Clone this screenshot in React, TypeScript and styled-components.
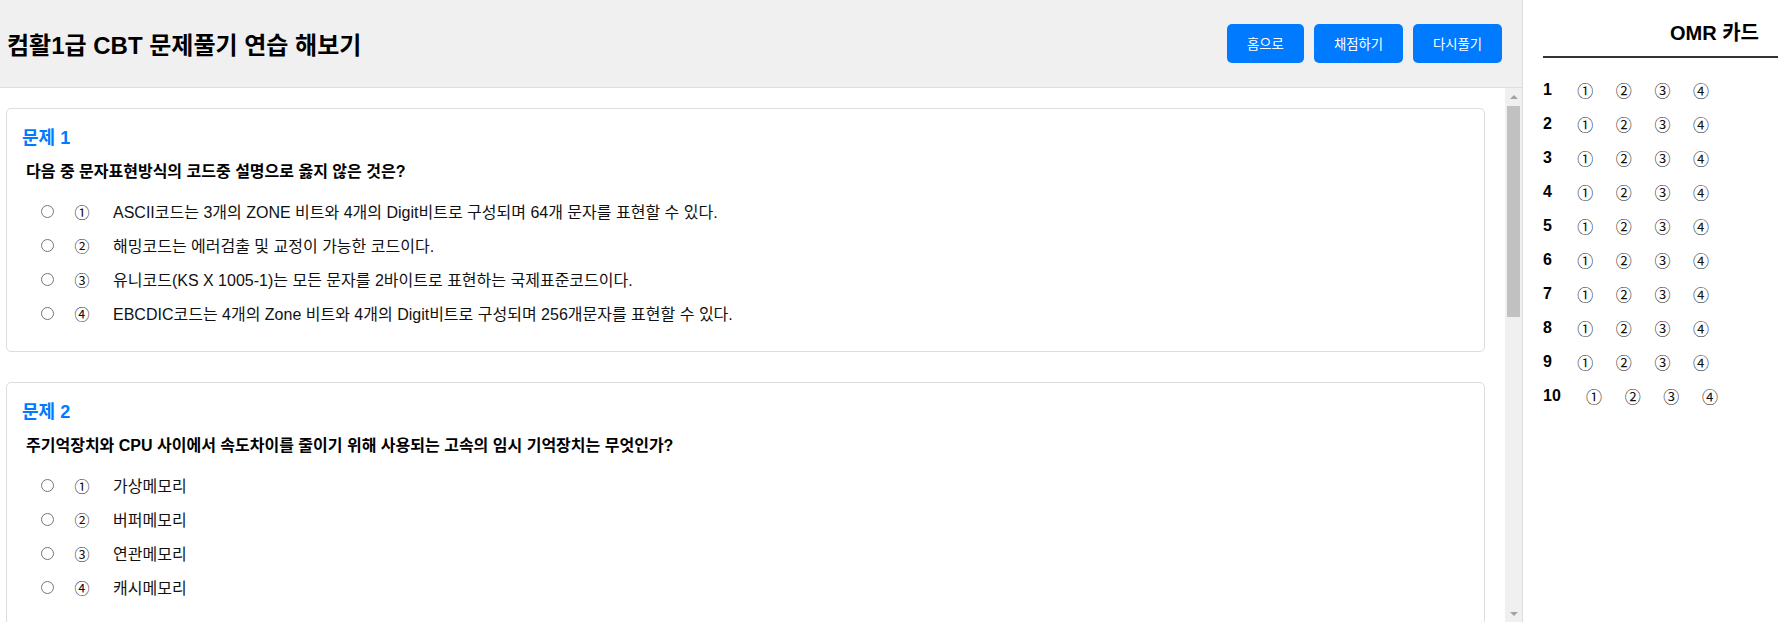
import { FC } from "react"
import styled, { createGlobalStyle } from "styled-components"

interface Question {
  id: number
  text: string
  options: string[]
}

const questions: Question[] = [
  {
    id: 1,
    text: "다음 중 문자표현방식의 코드중 설명으로 옳지 않은 것은?",
    options: [
      "ASCII코드는 3개의 ZONE 비트와 4개의 Digit비트로 구성되며 64개 문자를 표현할 수 있다.",
      "해밍코드는 에러검출 및 교정이 가능한 코드이다.",
      "유니코드(KS X 1005-1)는 모든 문자를 2바이트로 표현하는 국제표준코드이다.",
      "EBCDIC코드는 4개의 Zone 비트와 4개의 Digit비트로 구성되며 256개문자를 표현할 수 있다.",
    ],
  },
  {
    id: 2,
    text: "주기억장치와 CPU 사이에서 속도차이를 줄이기 위해 사용되는 고속의 임시 기억장치는 무엇인가?",
    options: ["가상메모리", "버퍼메모리", "연관메모리", "캐시메모리"],
  },
  {
    id: 3,
    text: "다음 중 CPU 내부의 레지스터에 관한 설명으로 옳지 않은 것은?",
    options: [
      "프로그램 카운터(PC)는 다음에 실행할 명령어의 주소를 기억한다.",
      "명령 레지스터(IR)는 현재 실행 중인 명령어를 기억한다.",
      "누산기(AC)는 연산 결과를 일시적으로 기억한다.",
      "메모리 주소 레지스터(MAR)는 기억장치에서 읽은 데이터를 기억한다.",
    ],
  },
  {
    id: 4,
    text: "다음 중 인터넷 프로토콜인 TCP/IP에 관한 설명으로 옳지 않은 것은?",
    options: [
      "TCP는 메시지를 송수신의 주소와 정보로 묶어 패킷 단위로 나눈다.",
      "IP는 패킷 주소를 해석하고 경로를 결정하여 다음 호스트로 전송한다.",
      "TCP는 OSI 7계층 중 전송 계층에 해당한다.",
      "IP는 OSI 7계층 중 응용 계층에 해당한다.",
    ],
  },
]

const marks = ["①", "②", "③", "④"]
const omrNumbers = Array.from({ length: 10 }, (_, i) => i + 1)

const GlobalStyle = createGlobalStyle`
  * {
    box-sizing: border-box;
  }

  body {
    margin: 0;
    font-family: "Liberation Sans", "Noto Sans CJK KR", sans-serif;
    color: #111;
    background: #fff;
  }
`

const Page = styled.div`
  display: flex;
  height: 100vh;
  overflow: hidden;
`

const Main = styled.main`
  flex: 1;
  min-width: 0;
  display: flex;
  flex-direction: column;
`

const Header = styled.header`
  height: 88px;
  flex-shrink: 0;
  display: flex;
  align-items: center;
  justify-content: space-between;
  padding: 0 20px 0 7px;
  background: #f0f0f0;
  border-bottom: 1px solid #ddd;
`

const Title = styled.h1`
  margin: 0;
  font-size: 24px;
  font-weight: 700;
  color: #000;
`

const ButtonGroup = styled.div`
  display: flex;
  gap: 10px;
`

const Button = styled.button`
  height: 39px;
  padding: 0 20px;
  border: none;
  border-radius: 5px;
  background: #007bff;
  color: #fff;
  font-family: inherit;
  font-size: 13.33px;
  cursor: pointer;
`

const Body = styled.div`
  flex: 1;
  min-height: 0;
  display: flex;
`

const ScrollArea = styled.div`
  flex: 1;
  min-width: 0;
  overflow: hidden;
  padding: 20px 20px 0 6px;
`

const ScrollTrack = styled.div`
  width: 17px;
  flex-shrink: 0;
  display: flex;
  flex-direction: column;
  background: #f0f0f0;
`

const ScrollArrow = styled.div<{ $down?: boolean }>`
  height: 17px;
  flex-shrink: 0;
  display: flex;
  align-items: center;
  justify-content: center;
  margin-top: ${(p) => (p.$down ? "auto" : "0")};

  &::before {
    content: "";
    width: 0;
    height: 0;
    border-left: 4px solid transparent;
    border-right: 4px solid transparent;
    ${(p) =>
      p.$down ? "border-top: 4px solid #a3a3a3;" : "border-bottom: 4px solid #a3a3a3;"}
  }
`

const ScrollThumb = styled.div`
  height: 211px;
  flex-shrink: 0;
  margin: 1px 2px 0;
  background: #c1c1c1;
`

const QuestionCard = styled.section`
  border: 1px solid #ddd;
  border-radius: 5px;
  padding: 15px 15px 17px;
  margin-bottom: 30px;
`

const QuestionNumber = styled.h3`
  margin: 0;
  font-size: 18px;
  line-height: 28px;
  font-weight: 700;
  color: #007bff;
`

const QuestionText = styled.p`
  margin: 10px 0 0;
  padding-left: 4px;
  font-size: 16px;
  line-height: 20px;
  font-weight: 700;
  color: #000;
`

const OptionList = styled.ul`
  list-style: none;
  margin: 12px 0 4px;
  padding: 0;
`

const OptionRow = styled.li`
  display: flex;
  align-items: center;
  height: 34px;
  padding-left: 18.5px;
  font-size: 16px;
`

const Radio = styled.input`
  margin: 0;
  width: 13px;
  height: 13px;
`

const OptionMark = styled.span`
  width: 30px;
  margin-left: 13.5px;
  text-align: center;
  font-size: 15px;
`

const OptionText = styled.span`
  margin-left: 16px;
`

const Sidebar = styled.aside`
  width: 256px;
  flex-shrink: 0;
  padding: 20px 0 0 20px;
  border-left: 1px solid #ddd;
  overflow: hidden;
  background: #fff;
`

const OmrTitle = styled.h2`
  width: 343px;
  margin: 0 0 15px;
  padding-bottom: 10px;
  border-bottom: 2px solid #333;
  text-align: center;
  font-size: 20px;
  line-height: 26px;
  font-weight: 700;
  color: #000;
`

const OmrRow = styled.div`
  display: flex;
  align-items: center;
  height: 34px;
`

const OmrNumber = styled.span`
  margin-right: 14px;
  font-size: 16px;
  font-weight: 700;
  color: #000;
`

const OmrMark = styled.span`
  margin: 0 11.3px;
  font-size: 16px;
  cursor: pointer;
`

const QuestionBlock: FC<{ question: Question }> = ({ question }) => (
  <QuestionCard>
    <QuestionNumber>문제 {question.id}</QuestionNumber>
    <QuestionText>{question.text}</QuestionText>
    <OptionList>
      {question.options.map((option, index) => (
        <OptionRow key={index}>
          <Radio type="radio" name={`q${question.id}`} />
          <OptionMark>{marks[index]}</OptionMark>
          <OptionText>{option}</OptionText>
        </OptionRow>
      ))}
    </OptionList>
  </QuestionCard>
)

const App: FC = () => {
  return (
    <Page>
      <GlobalStyle />
      <Main>
        <Header>
          <Title>컴활1급 CBT 문제풀기 연습 해보기</Title>
          <ButtonGroup>
            <Button>홈으로</Button>
            <Button>채점하기</Button>
            <Button>다시풀기</Button>
          </ButtonGroup>
        </Header>
        <Body>
          <ScrollArea>
            {questions.map((question) => (
              <QuestionBlock key={question.id} question={question} />
            ))}
          </ScrollArea>
          <ScrollTrack aria-hidden>
            <ScrollArrow />
            <ScrollThumb />
            <ScrollArrow $down />
          </ScrollTrack>
        </Body>
      </Main>
      <Sidebar>
        <OmrTitle>OMR 카드</OmrTitle>
        {omrNumbers.map((num) => (
          <OmrRow key={num}>
            <OmrNumber>{num}</OmrNumber>
            {marks.map((mark) => (
              <OmrMark key={mark}>{mark}</OmrMark>
            ))}
          </OmrRow>
        ))}
      </Sidebar>
    </Page>
  )
}

export default App
